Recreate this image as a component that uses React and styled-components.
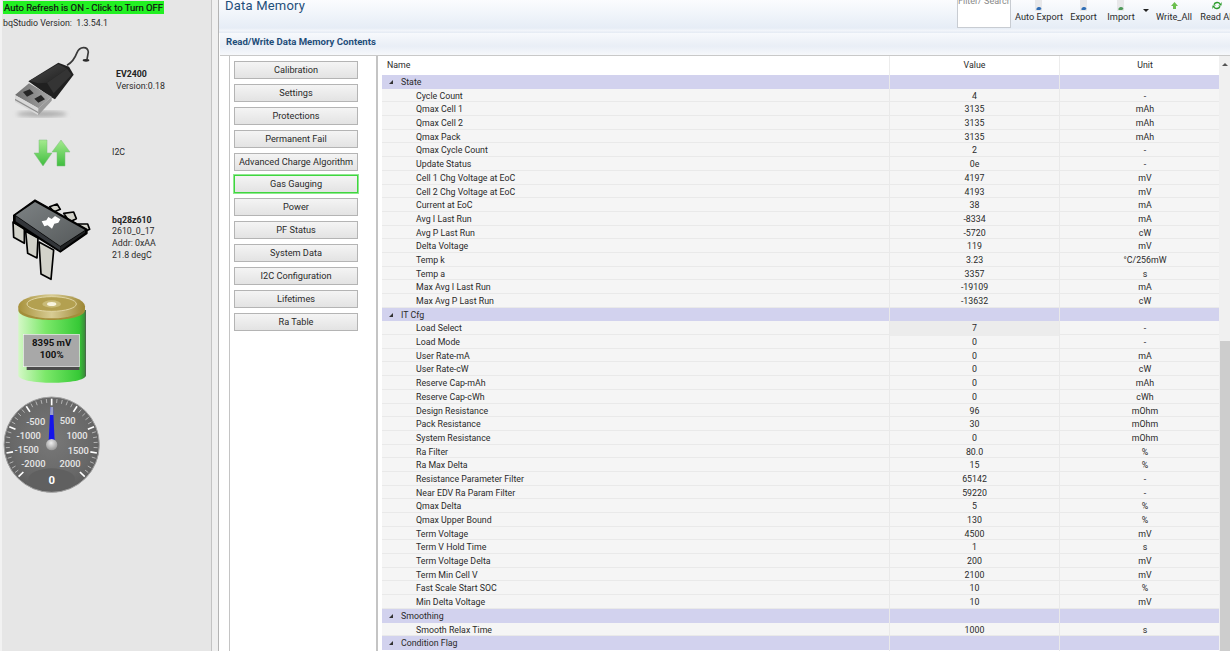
import styled, { createGlobalStyle } from "styled-components";

const GlobalStyle = createGlobalStyle`
  *, *::before, *::after {
    box-sizing: border-box;
  }
  html, body {
    margin: 0;
    padding: 0;
    height: 100%;
    overflow: hidden;
    background: #fff;
  }
  #root {
    height: 100%;
  }
`;

const FONT = `Roboto, "Liberation Sans", sans-serif`;

const Page = styled.div`
  display: flex;
  height: 651px;
  width: 1230px;
  overflow: hidden;
  font-family: ${FONT};
  font-size: 8.8px;
  color: #2a2a2a;
`;

const Sidebar = styled.aside`
  width: 211px;
  flex: none;
  display: flex;
  flex-direction: column;
  background: #e6e6e6;
  box-shadow: inset 2px 0 0 #f2f2f2;
`;

const Splitter = styled.div`
  width: 8px;
  flex: none;
  background: #f0f0f0;
  border-left: 1px solid #c4c4c4;
  border-right: 1px solid #b4b4b4;
`;

const RefreshBadge = styled.div`
  align-self: flex-start;
  margin: 1px 0 0 3px;
  height: 13px;
  line-height: 13px;
  padding: 0 1px;
  background: #22f022;
  color: #111;
  font-size: 9.5px;
  -webkit-text-stroke: 0.2px #111;
`;

const VersionLine = styled.div`
  margin: 3px 0 0 3px;
  height: 13px;
  line-height: 13px;
  white-space: pre;
`;

const DeviceRow = styled.div`
  display: grid;
  grid-template-columns: ${(p) => p.$col}px 1fr;
  align-items: center;
  height: ${(p) => p.$h}px;
  margin-top: ${(p) => p.$mt}px;
`;

const IconCell = styled.div`
  padding-left: ${(p) => p.$pl}px;
  svg {
    display: block;
  }
`;

const DeviceInfo = styled.div`
  line-height: 11.7px;
  padding-bottom: ${(p) => p.$pb || 0}px;
  b {
    display: block;
    font-weight: 700;
    color: #222;
  }
`;

const Stacked = styled.div`
  margin: ${(p) => p.$m};
  svg {
    display: block;
  }
`;

const Main = styled.main`
  flex: 1;
  min-width: 0;
  display: flex;
  flex-direction: column;
`;

const Header = styled.header`
  height: 33px;
  flex: none;
  display: flex;
  justify-content: space-between;
  overflow: hidden;
  background: linear-gradient(#fbfcfe 0%, #e6edf6 85%, #f2f5fa 92%, #e4eaf3 100%);
`;

const Title = styled.h1`
  margin: -3px 0 0 6px;
  font-size: 13px;
  font-weight: 400;
  line-height: 18px;
  color: #1f4e7a;
  letter-spacing: 0.2px;
`;

const Toolbar = styled.div`
  display: flex;
  align-items: flex-start;
  height: 28px;
  margin-right: -5px;
`;

const FilterBox = styled.div`
  width: 54px;
  height: 28px;
  margin-right: 2px;
  overflow: hidden;
  background: #fff;
  border: 1px solid #c8ccd2;
  border-top: 0;
  text-align: center;
  white-space: nowrap;
  color: #888;
  line-height: 2px;
  font-size: 9px;
`;

const ToolButton = styled.div`
  display: flex;
  flex-direction: column;
  align-items: center;
  width: ${(p) => p.$w}px;
  flex: none;
  white-space: nowrap;
  line-height: 12px;
  font-size: 9.2px;
  svg {
    display: block;
    height: 11px;
  }
`;

const Caret = styled.span`
  width: 0;
  height: 0;
  margin: 9px 0 0 3px;
  border: 3px solid transparent;
  border-top: 3px solid #222;
  border-bottom: 0;
`;

const SubHeader = styled.div`
  height: 23px;
  flex: none;
  margin-left: 1px;
  padding-left: 6px;
  line-height: 17px;
  font-weight: 700;
  font-size: 9.6px;
  color: #1f4e7a;
  background: linear-gradient(#f7f9fc 0%, #e9eef6 60%, #f6f8fb 100%);
  border-bottom: 1px solid #c9c9c9;
`;

const Content = styled.div`
  flex: 1;
  min-height: 0;
  display: flex;
  background: #fff;
`;

const NavPanel = styled.nav`
  width: 149px;
  flex: none;
  margin-left: 10px;
  margin-right: 4px;
  padding: 5px 0 0 4px;
  display: flex;
  flex-direction: column;
  gap: 4.9px;
  border-left: 1px solid #c4c4c4;
  border-right: 2px solid #c4c4c4;
`;

const NavButton = styled.button`
  width: 124px;
  height: 18px;
  padding: 0 0 1px;
  font: inherit;
  font-size: 9.2px;
  color: #2a2a2a;
  background: linear-gradient(#f4f4f4, #e3e3e3);
  border: 1px solid ${(p) => (p.$active ? "#3fd63f" : "#b4b4b4")};
  box-shadow: ${(p) => (p.$active ? "0 0 0 1px #8fe88f" : "none")};
  white-space: nowrap;
`;

const TableWrap = styled.section`
  flex: 1;
  min-width: 0;
  position: relative;
  overflow: hidden;
`;

const COLUMNS = "508px 170px 170px";

const HeadRow = styled.div`
  display: grid;
  grid-template-columns: ${COLUMNS};
  height: 19px;
  line-height: 19px;
  background: #fff;
  text-align: center;
  span:not(:last-child) {
    border-right: 1px solid #ececec;
  }
  span:first-child {
    text-align: left;
    padding-left: 5px;
  }
`;

const DataRow = styled.div`
  display: grid;
  grid-template-columns: ${COLUMNS};
  height: 13.7px;
  line-height: 14.4px;
  text-align: center;
  white-space: nowrap;
  background: ${(p) => (p.$group ? "#d2d2ee" : "#f5f5f5")};
  border-bottom: 1px solid ${(p) => (p.$group ? "#d2d2ee" : "#e9e9e9")};
`;

const NameCell = styled.span`
  text-align: left;
  padding-left: ${(p) => (p.$group ? 19 : 34)}px;
  border-right: 1px solid #e9e9e9;
  position: relative;
`;

const ValueCell = styled.span`
  background: ${(p) => (p.$edit ? "#ececec" : "transparent")};
  border-right: 1px solid #e9e9e9;
`;

const UnitCell = styled.span``;

const Expander = styled.i`
  position: absolute;
  left: 7px;
  top: 5px;
  width: 0;
  height: 0;
  border-left: 4px solid transparent;
  border-bottom: 4px solid #333;
`;

const Scrollbar = styled.div`
  position: absolute;
  top: 0;
  right: 0;
  bottom: 0;
  width: 11px;
  display: flex;
  flex-direction: column;
  background: #f0f0f0;
`;

const ScrollArrow = styled.div`
  height: 19px;
  flex: none;
  display: flex;
  justify-content: center;
  padding-top: 7px;
  &::before {
    content: "";
    width: 0;
    height: 0;
    border: 3px solid transparent;
    border-bottom: 3px solid #555;
    border-top: 0;
  }
`;

const ScrollThumb = styled.div`
  margin: 266px 0 0 1px;
  flex: 1;
  background: #cdcdcd;
`;

const sections = [
  ["State", [
    ["Cycle Count", "4", "-"],
    ["Qmax Cell 1", "3135", "mAh"],
    ["Qmax Cell 2", "3135", "mAh"],
    ["Qmax Pack", "3135", "mAh"],
    ["Qmax Cycle Count", "2", "-"],
    ["Update Status", "0e", "-"],
    ["Cell 1 Chg Voltage at EoC", "4197", "mV"],
    ["Cell 2 Chg Voltage at EoC", "4193", "mV"],
    ["Current at EoC", "38", "mA"],
    ["Avg I Last Run", "-8334", "mA"],
    ["Avg P Last Run", "-5720", "cW"],
    ["Delta Voltage", "119", "mV"],
    ["Temp k", "3.23", "°C/256mW"],
    ["Temp a", "3357", "s"],
    ["Max Avg I Last Run", "-19109", "mA"],
    ["Max Avg P Last Run", "-13632", "cW"],
  ]],
  ["IT Cfg", [
    ["Load Select", "7", "-", true],
    ["Load Mode", "0", "-"],
    ["User Rate-mA", "0", "mA"],
    ["User Rate-cW", "0", "cW"],
    ["Reserve Cap-mAh", "0", "mAh"],
    ["Reserve Cap-cWh", "0", "cWh"],
    ["Design Resistance", "96", "mOhm"],
    ["Pack Resistance", "30", "mOhm"],
    ["System Resistance", "0", "mOhm"],
    ["Ra Filter", "80.0", "%"],
    ["Ra Max Delta", "15", "%"],
    ["Resistance Parameter Filter", "65142", "-"],
    ["Near EDV Ra Param Filter", "59220", "-"],
    ["Qmax Delta", "5", "%"],
    ["Qmax Upper Bound", "130", "%"],
    ["Term Voltage", "4500", "mV"],
    ["Term V Hold Time", "1", "s"],
    ["Term Voltage Delta", "200", "mV"],
    ["Term Min Cell V", "2100", "mV"],
    ["Fast Scale Start SOC", "10", "%"],
    ["Min Delta Voltage", "10", "mV"],
  ]],
  ["Smoothing", [["Smooth Relax Time", "1000", "s"]]],
  ["Condition Flag", []],
];

const navItems = [
  "Calibration",
  "Settings",
  "Protections",
  "Permanent Fail",
  "Advanced Charge Algorithm",
  "Gas Gauging",
  "Power",
  "PF Status",
  "System Data",
  "I2C Configuration",
  "Lifetimes",
  "Ra Table",
];

function UsbIcon() {
  return (
    <svg width="95" height="85" viewBox="0 0 285 255" fill="none">
      <defs>
        <linearGradient id="usbBody" x1="0" y1="0" x2="1" y2="1">
          <stop offset="0" stopColor="#4c4c4c" />
          <stop offset="1" stopColor="#1e1e1e" />
        </linearGradient>
        <linearGradient id="usbMetal" x1="0" y1="0" x2="1" y2="0">
          <stop offset="0" stopColor="#6e6e6e" />
          <stop offset="1" stopColor="#a8a8a8" />
        </linearGradient>
        <filter id="usbShadow"><feGaussianBlur stdDeviation="6" /></filter>
      </defs>
      <ellipse cx="110" cy="222" rx="75" ry="9" fill="#aaa" filter="url(#usbShadow)" />
      <path d="M186 76 C204 66 210 54 216 38 C224 18 248 18 250 36 L246 58" stroke="#3a3a3a" strokeWidth="5" />
      <ellipse cx="243" cy="61" rx="10" ry="4" fill="#2a2a2a" />
      <path d="M70 124 L160 68 L192 80 L206 104 L150 178 L136 170 Z" fill="#202020" />
      <path d="M74 122 L160 72 L186 86 L126 128 L100 130 Z" fill="url(#usbBody)" />
      <path d="M126 128 L186 86 L200 104 L146 160 Z" fill="#343434" />
      <path d="M30 165 L72 130 L140 170 L100 205 Z" fill="url(#usbMetal)" />
      <path d="M30 165 L100 205 V226 L30 186 Z" fill="#d8d8d8" />
      <path d="M30 176 L100 216 V220 L30 181 Z" fill="#8d8d8d" />
      <path d="M100 205 L140 170 V182 L100 226 Z" fill="#9a9a9a" />
      <path d="M54 156 L74 148 L86 160 L66 170 Z" fill="#262626" />
      <path d="M88 176 L108 165 L120 178 L100 188 Z" fill="#262626" />
    </svg>
  );
}

function TransferArrows() {
  return (
    <svg width="38" height="28" viewBox="0 0 38 28">
      <defs>
        <linearGradient id="arrowGreen" x1="0" y1="0" x2="0" y2="1">
          <stop offset="0" stopColor="#a4ea8e" />
          <stop offset="1" stopColor="#3fbd3f" />
        </linearGradient>
      </defs>
      <path d="M6 1 H14 V14 H19 L10 27 L1 14 H6 Z" fill="url(#arrowGreen)" stroke="#7fbc7f" strokeWidth="0.5" />
      <path d="M24 27 H32 V13 H37 L28 1 L19 13 H24 Z" fill="url(#arrowGreen)" stroke="#7fbc7f" strokeWidth="0.5" />
    </svg>
  );
}

const chipPins = [
  "M134 44 L156 36 L166 52 L146 60 Z",
  "M176 64 L206 60 L214 80 L194 90 Z",
  "M220 96 L248 96 L254 112 L236 120 Z",
  "M24 90 L58 108 V154 L26 136 Z",
  "M62 118 L99 138 L96 198 L68 184 Z",
  "M102 150 L146 174 L138 262 L108 246 Z",
];

function ChipIcon() {
  return (
    <svg width="95" height="92" viewBox="0 0 285 276">
      <defs>
        <linearGradient id="chipTop" x1="0" y1="0" x2="1" y2="1">
          <stop offset="0" stopColor="#7d8284" />
          <stop offset="1" stopColor="#55595a" />
        </linearGradient>
      </defs>
      {chipPins.map((d) => (
        <path key={d} d={d} fill="#d2d2ca" stroke="#000" strokeWidth="5" strokeLinejoin="round" />
      ))}
      <path
        d="M26 70 L90 24 L246 112 V124 L166 180 L26 92 Z"
        fill="#000"
        stroke="#000"
        strokeWidth="4"
        strokeLinejoin="round"
      />
      <path d="M32 70 L90 30 L240 114 L166 162 Z" fill="url(#chipTop)" />
      <path d="M32 72 L166 164 V176 L32 88 Z" fill="#33363a" />
      <path d="M166 164 L240 116 V122 L166 176 Z" fill="#1f2122" />
      <path d="M110 88 L124 85 L130 75 L140 81 L150 72 L166 82 L160 92 L148 95 L141 110 L128 100 L118 103 Z" fill="#fff" />
    </svg>
  );
}

function BatteryIcon() {
  return (
    <svg width="85" height="100" viewBox="0 0 255 300">
      <defs>
        <linearGradient id="batBody" x1="0" y1="0" x2="1" y2="0">
          <stop offset="0" stopColor="#d4f8c6" />
          <stop offset="0.4" stopColor="#7ce86a" />
          <stop offset="0.9" stopColor="#36c936" />
          <stop offset="0.98" stopColor="#3a8f3a" />
          <stop offset="1" stopColor="#555" />
        </linearGradient>
        <linearGradient id="batCap" x1="0" y1="0" x2="1" y2="0">
          <stop offset="0" stopColor="#a8923c" />
          <stop offset="0.5" stopColor="#d8cc94" />
          <stop offset="1" stopColor="#9c8634" />
        </linearGradient>
      </defs>
      <path d="M25 60 H228 V256 C228 286 25 286 25 256 Z" fill="url(#batBody)" />
      <path d="M25 50 V60 C25 100 225 100 225 60 V50 Z" fill="#a38e3a" />
      <ellipse cx="125" cy="49" rx="100" ry="36" fill="url(#batCap)" />
      <ellipse cx="125" cy="42" rx="74" ry="22" fill="#b3a050" stroke="#e0d5a4" strokeWidth="3" />
      <ellipse cx="125" cy="42" rx="28" ry="11" fill="#c9bb78" />
      <ellipse cx="125" cy="42" rx="14" ry="6" fill="#f8f4de" />
      <rect x="50" y="200" width="158" height="40" fill="#4c4c4c" />
      <rect x="40" y="133" width="168" height="97" fill="#a8a8a8" stroke="#f4f4f4" strokeWidth="2" />
      <text x="125" y="167" textAnchor="middle" fontFamily={FONT} fontSize="29" fontWeight="700" fill="#111">8395 mV</text>
      <text x="125" y="204" textAnchor="middle" fontFamily={FONT} fontSize="29" fontWeight="700" fill="#111">100%</text>
    </svg>
  );
}

const gaugeLabels = [
  ["-500", 107, 95],
  ["500", 203, 93],
  ["-1000", 86, 137],
  ["1000", 231, 137],
  ["-1500", 80, 180],
  ["1500", 235, 182],
  ["-2000", 100, 222],
  ["2000", 210, 223],
];

function Gauge() {
  const cx = 155;
  const cy = 155;
  const ticks = [];
  for (let i = -20; i <= 20; i++) {
    const major = i % 5 === 0;
    const a = (i * 6.7 * Math.PI) / 180;
    const r1 = 138;
    const r2 = major ? 118 : 126;
    ticks.push(
      <line
        key={i}
        x1={cx + r1 * Math.sin(a)}
        y1={cy - r1 * Math.cos(a)}
        x2={cx + r2 * Math.sin(a)}
        y2={cy - r2 * Math.cos(a)}
        stroke={major ? "#fff" : "#c4c4c4"}
        strokeWidth={major ? 5 : 2.5}
      />
    );
  }
  return (
    <svg width="104" height="104" viewBox="0 0 312 312">
      <defs>
        <radialGradient id="gaugeFace" cx="0.5" cy="0.45" r="0.6">
          <stop offset="0" stopColor="#787878" />
          <stop offset="0.7" stopColor="#686868" />
          <stop offset="1" stopColor="#5a5a5a" />
        </radialGradient>
        <radialGradient id="gaugeHub" cx="0.45" cy="0.35" r="0.7">
          <stop offset="0" stopColor="#eee" />
          <stop offset="1" stopColor="#8f8f8f" />
        </radialGradient>
      </defs>
      <circle cx={cx} cy={cy} r="143" fill="url(#gaugeFace)" stroke="#a0a0a0" strokeWidth="3" />
      {ticks}
      <ellipse cx={cx} cy="258" rx="70" ry="32" fill="#606060" />
      {gaugeLabels.map(([t, x, y]) => (
        <text key={t} x={x} y={y} textAnchor="middle" fontFamily={FONT} fontSize="28" fontWeight="500" fill="#e6e6e6">{t}</text>
      ))}
      <text x={cx} y="272" textAnchor="middle" fontFamily={FONT} fontSize="34" fontWeight="700" fill="#fff">0</text>
      <path d="M151 42 H159 L164 145 H146 Z" fill="#1414ea" />
      <path d="M151 42 H159 L160 66 H150 Z" fill="#9aa0c8" />
      <circle cx={cx} cy={cy} r="17" fill="url(#gaugeHub)" />
    </svg>
  );
}

function DocIcon({ color }) {
  return (
    <svg width="12" height="11" viewBox="0 0 12 11">
      <path d="M2 0 H9 V11 H2 Z" fill="#e8e8ea" />
      <path d="M3.5 10 A2.5 2.5 0 0 1 8.5 9 L7 10 Z" fill={color} />
    </svg>
  );
}

function App() {
  return (
    <Page>
      <GlobalStyle />
      <Sidebar>
        <RefreshBadge>Auto Refresh is ON - Click to Turn OFF</RefreshBadge>
        <VersionLine>bqStudio Version:  1.3.54.1</VersionLine>
        <DeviceRow $col={116} $h={85} $mt={10}>
          <IconCell $pl={5}><UsbIcon /></IconCell>
          <DeviceInfo $pb={3}>
            <b>EV2400</b>
            Version:0.18
          </DeviceInfo>
        </DeviceRow>
        <DeviceRow $col={112} $h={28} $mt={14}>
          <IconCell $pl={33}><TransferArrows /></IconCell>
          <DeviceInfo>I2C</DeviceInfo>
        </DeviceRow>
        <DeviceRow $col={112} $h={92} $mt={25}>
          <IconCell $pl={5}><ChipIcon /></IconCell>
          <DeviceInfo>
            <b>bq28z610</b>
            2610_0_17
            <br />
            Addr: 0xAA
            <br />
            21.8 degC
          </DeviceInfo>
        </DeviceRow>
        <Stacked $m="6px 0 0 10px"><BatteryIcon /></Stacked>
        <Stacked $m="3px 0 0 0"><Gauge /></Stacked>
      </Sidebar>
      <Splitter />
      <Main>
        <Header>
          <Title>Data Memory</Title>
          <Toolbar>
            <FilterBox>Filter/ Search</FilterBox>
            <ToolButton $w={52}><DocIcon color="#2f6db5" />Auto Export</ToolButton>
            <ToolButton $w={37}><DocIcon color="#2f6db5" />Export</ToolButton>
            <ToolButton $w={38}><DocIcon color="#4f9a5a" />Import</ToolButton>
            <Caret />
            <ToolButton $w={50}>
              <svg width="9" height="11" viewBox="0 0 9 11"><path d="M4.5 2 L8 6 H6 V9 H3 V6 H1 Z" fill="#6cbf4f" /></svg>
              Write_All
            </ToolButton>
            <ToolButton $w={36}>
              <svg width="12" height="11" viewBox="0 0 12 12"><path d="M2 5 A4.5 4.5 0 0 1 10 4 L11 2 V6 H7 L9 5 A3 3 0 0 0 3.5 5.5 Z M10 7 A4.5 4.5 0 0 1 2 8 L1 10 V6 H5 L3 7 A3 3 0 0 0 8.5 6.5 Z" fill="#2a9a2a" /></svg>
              Read All
            </ToolButton>
          </Toolbar>
        </Header>
        <SubHeader>Read/Write Data Memory Contents</SubHeader>
        <Content>
          <NavPanel>
            {navItems.map((item) => (
              <NavButton key={item} $active={item === "Gas Gauging"}>{item}</NavButton>
            ))}
          </NavPanel>
          <TableWrap>
            <HeadRow>
              <span>Name</span>
              <span>Value</span>
              <span>Unit</span>
            </HeadRow>
            {sections.map(([title, rows]) => [
              <DataRow key={title} $group>
                <NameCell $group><Expander />{title}</NameCell>
                <ValueCell />
                <UnitCell />
              </DataRow>,
              ...rows.map(([name, value, unit, edit]) => (
                <DataRow key={name}>
                  <NameCell>{name}</NameCell>
                  <ValueCell $edit={edit}>{value}</ValueCell>
                  <UnitCell>{unit}</UnitCell>
                </DataRow>
              )),
            ])}
            <Scrollbar>
              <ScrollArrow />
              <ScrollThumb />
            </Scrollbar>
          </TableWrap>
        </Content>
      </Main>
    </Page>
  );
}

export default App;
